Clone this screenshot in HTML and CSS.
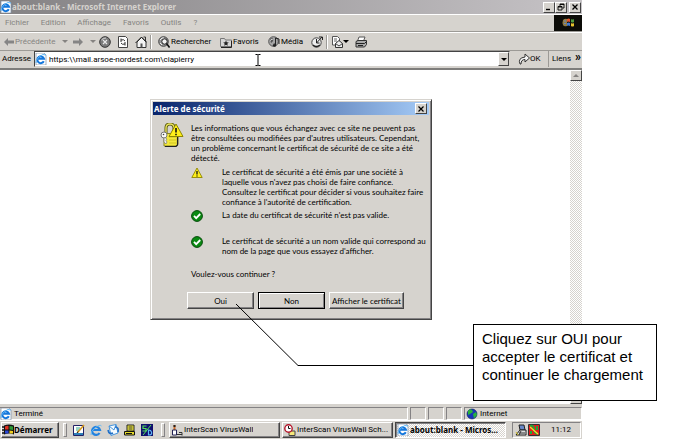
FILE: index.html
```
<!DOCTYPE html>
<html lang="fr">
<head>
    <meta charset="UTF-8">
    <meta name="viewport" content="width=device-width, initial-scale=1.0">
    <title>about:blank - Microsoft Internet Explorer</title>
    <link rel="stylesheet" href="styles.css">
</head>
<body>
    <svg class="symbols" aria-hidden="true">
        <symbol id="ie" viewBox="0 0 12 12">
            <path d="M1 0h8l2 2v10H1z" fill="#fff" stroke="#7d8fa8" stroke-width=".7"/>
            <path d="M8.8 8.2A3.4 3.4 0 1 1 9 5.8H3" fill="none" stroke="#1577dc" stroke-width="2"/>
            <path d="M1 10Q0 8 4 4t7-2" fill="none" stroke="#5ab4f5"/>
        </symbol>
        <symbol id="check" viewBox="0 0 12 12">
            <circle cx="6" cy="6" r="5.4" fill="#0a8a12" stroke="#064b0a" stroke-width="1"/>
            <path d="M3 5.8l2.2 2.3L9.2 4" fill="none" stroke="#fff" stroke-width="1.8"/>
        </symbol>
        <symbol id="warn" viewBox="0 0 12 12">
            <path d="M6 1l5.2 9.5H.8z" fill="#ffef1a" stroke="#8d8600" stroke-width=".9" stroke-linejoin="round"/>
            <path d="M6 4v3.4M6 8.4v1.2" stroke="#111" stroke-width="1.3"/>
        </symbol>
    </svg>

    <div class="screen">
        <header class="titlebar">
            <svg class="icon"><use href="#ie"/></svg>
            <h1>about:blank - Microsoft Internet Explorer</h1>
            <button class="caption" aria-label="Réduire"><svg viewBox="0 0 8 8"><path d="M1 6.5h4" stroke="#000" stroke-width="1.4"/></svg></button>
            <button class="caption" aria-label="Restaurer"><svg viewBox="0 0 8 8"><path d="M3 3V1h4v4H5.500M3 1.500h4M1 3.500h4v3.500H1zM1 4h4" fill="none" stroke="#000" stroke-width=".9"/></svg></button>
            <button class="caption close" aria-label="Fermer"><svg viewBox="0 0 8 8"><path d="M1.500 1.500l5 5M6.500 1.500l-5 5" stroke="#000" stroke-width="1.3"/></svg></button>
        </header>

        <nav class="menubar">
            <button>Fichier</button>
            <button>Edition</button>
            <button>Affichage</button>
            <button>Favoris</button>
            <button>Outils</button>
            <button>?</button>
            <span class="brand">
                <svg viewBox="0 0 14 12">
                    <path d="M6 2q2-1 3 0v3q-2-1-3 0z" fill="#e2562b"/>
                    <path d="M10 2q1.500 1 3 0v3q-1.500 1-3 0z" fill="#4f9b3f"/>
                    <path d="M6 6q2-1 3 0v3q-2-1-3 0z" fill="#3f78d0"/>
                    <path d="M10 6q1.500 1 3 0v3q-1.500 1-3 0z" fill="#e7c32f"/>
                    <path d="M2 3q2-2 4-1v7q-3 1-4-1-1-2 0-5z" fill="#8f7a45"/>
                    <path d="M3 4h2M3 6.500h2" stroke="#6d86b8"/>
                </svg>
            </span>
        </nav>

        <div class="toolbar">
            <button class="back" disabled><svg class="icon" viewBox="0 0 12 12"><path d="M1 6l4-4v2.500h6v3H5V10z" fill="#858585"/></svg>Précédente</button>
            <button class="more" disabled aria-label="Historique précédent"><i class="arrow"></i></button>
            <button class="forward" disabled aria-label="Suivante"><svg class="icon" viewBox="0 0 12 12"><path d="M11 6L7 2v2.500H1v3h6V10z" fill="#858585"/></svg></button>
            <button class="more" disabled aria-label="Historique suivant"><i class="arrow"></i></button>
            <button class="tool" aria-label="Arrêter"><svg class="icon" viewBox="0 0 12 12"><circle cx="6" cy="6" r="5.300" fill="#7b7b7b" stroke="#333"/><path d="M2.500 4Q4 1.800 7 2" stroke="#ddd" fill="none"/><path d="M4 4l4 4M8 4L4 8" stroke="#e8e8e8" stroke-width="1.200"/></svg></button>
            <button class="tool" aria-label="Actualiser"><svg class="icon" viewBox="0 0 12 12"><path d="M1.500.500h7l2 2v9h-9z" fill="#fff" stroke="#444"/><path d="M8 5Q7 3 4 4M4 2.500V6M4 7q1 2 4 1M8 6v3.500" fill="none" stroke="#333"/></svg></button>
            <button class="tool" aria-label="Démarrage"><svg class="icon" viewBox="0 0 12 12"><path d="M8.500 1h2v4" fill="none" stroke="#333"/><path d="M2 6v5.500h9V6L6.500 1.500z" fill="#f4f4f4" stroke="#333"/><path d="M.500 7l6-6L12 6.500" fill="none" stroke="#222"/><path d="M5.500 7.500h2v4h-2z" fill="#555"/></svg></button>
            <span class="sep"></span>
            <button class="search"><svg class="icon" viewBox="0 0 12 12"><circle cx="5.500" cy="5.500" r="4.800" fill="#999" stroke="#444"/><path d="M2 4Q4 1 6 2M2 7l2 2" stroke="#eee" fill="none"/><circle cx="6.500" cy="5.500" r="2.700" fill="#f2f2f2" stroke="#222"/><path d="M8.500 7.500l3 4" stroke="#111" stroke-width="1.600"/></svg>Rechercher</button>
            <button class="favs"><svg class="icon" viewBox="0 0 12 12"><path d="M.500 10.500v-8h4l1 1.500h6v6.500z" fill="#d6d6d6" stroke="#777"/><path d="M1 11.500h10.500V5" stroke="#222" fill="none"/><path d="M6 4.500l.8 1.800 2 .2-1.500 1.300.5 2L6 8.800 4.200 9.800l.5-2-1.500-1.300 2-.2z" fill="#222"/></svg>Favoris</button>
            <button class="media"><svg class="icon" viewBox="0 0 12 12"><circle cx="5.500" cy="5.500" r="4.800" fill="#a6a6a6" stroke="#555"/><path d="M2 3q2-2 3 0t-2 4zM5 8l2-1 1 2-2 1.500z" fill="#555"/><path d="M7.500 9V2l3.500 1v5" fill="none" stroke="#222"/><ellipse cx="6.500" cy="9.500" rx="1.600" ry="1.300" fill="#222"/><path d="M2.500 4.500q1-2 2-1" stroke="#fff" fill="none"/></svg>Média</button>
            <button class="tool" aria-label="Historique"><svg class="icon" viewBox="0 0 12 12"><circle cx="5.500" cy="6.500" r="4.700" fill="#efefef" stroke="#444"/><path d="M2 9q3 3 7 0" stroke="#222" stroke-width="1.500" fill="none"/><path d="M5.500 3v4h3M5.500 7L11 1M8 1h3.500v3" stroke="#222" fill="none"/></svg></button>
            <span class="sep"></span>
            <button class="mail" aria-label="Courrier"><svg class="icon" viewBox="0 0 12 12"><path d="M1.500.500h5l2 2V9h-7z" fill="#fff" stroke="#555"/><path d="M3 3h3M3 5h3" stroke="#666"/><path d="M4.500 7.500l3.500-3 3.500 3v4h-7z" fill="#eee" stroke="#333"/><path d="M4.500 7.500L8 10l3.500-2.500" fill="none" stroke="#444"/></svg><i class="arrow dark"></i></button>
            <button class="tool" aria-label="Imprimer"><svg class="icon" viewBox="0 0 12 12"><path d="M4 1h6L8.500 5h-6z" fill="#fff" stroke="#555"/><path d="M1 5.500l2-1h8.500v4l-2 2.500H1z" fill="#aaa" stroke="#333"/><path d="M1 7.500h8.500l2-2M3 9.500h5" fill="none" stroke="#222"/></svg></button>
        </div>

        <form class="address">
            <label for="url">Adresse</label>
            <div class="combo">
                <svg class="icon"><use href="#ie"/></svg>
                <input type="text" id="url" name="url" value="https:\\mail.arsoe-nordest.com\ciapierry">
                <button type="button" aria-label="Adresses récentes"><i class="arrow dark"></i></button>
            </div>
            <button type="button" class="go"><svg class="icon" viewBox="0 0 12 12"><path d="M2 11Q-.5 5 7 4V1l4.500 4L7 9V6.500Q3 6.500 3 11z" fill="#f6f6f6" stroke="#333"/></svg>OK</button>
            <button type="button" class="links">Liens <b>»</b></button>
        </form>

        <main class="page">
            <div class="scrollbar"><button aria-label="Défiler vers le haut"><i class="arrow up"></i></button><button aria-label="Défiler vers le bas"><i class="arrow"></i></button></div>
            <svg class="cursor" viewBox="0 0 6 12"><path d="M.500.500h2l.500.500.500-.500h2M.500 11.500h2l.500-.500.500.500h2M3 1v10" fill="none" stroke="#000"/></svg>

            <section class="dialog" role="dialog" aria-labelledby="dlg-title">
                <div class="dialog-title">
                    <h2 id="dlg-title">Alerte de sécurité</h2>
                    <button class="caption" aria-label="Fermer"><svg viewBox="0 0 8 8"><path d="M1.500 1.500l5 5M6.500 1.500l-5 5" stroke="#000" stroke-width="1.2"/></svg></button>
                </div>
                <div class="dialog-body">
                    <svg class="lock" viewBox="0 0 24 24">
                        <path d="M6 11V5q0-4 4-4t4 4v6" fill="none" stroke="#55550a" stroke-width="3"/>
                        <path d="M6 11V5q0-4 4-4t4 4v6" fill="none" stroke="#e8e35e" stroke-width="1.400"/>
                        <path d="M4 10.500h14v11l-2 1.500H4z" fill="#f4e83c" stroke="#8a8420"/>
                        <path d="M17.500 10v12l-1.500 1.500H5" fill="none" stroke="#222" stroke-width="1.200"/>
                        <path d="M9 14h7M9 17h7M9 20h7" stroke="#d0c520"/>
                        <circle cx="4" cy="12" r="3" fill="#fafafa" stroke="#777"/>
                        <circle cx="3.500" cy="11.500" r=".8" fill="#444"/>
                        <path d="M5 14.500l2 1.500-1 1.500 1 1.500-1 2-2-2v-4z" fill="#eee" stroke="#777" stroke-width=".7"/>
                        <path d="M16 1l7 12.500H9z" fill="#ffef1a" stroke="#8d8600" stroke-linejoin="round"/>
                        <path d="M16 5v4.500M16 10.800v1.500" stroke="#111" stroke-width="1.600"/>
                    </svg>
                    <div class="message">
                        <p>Les informations que vous échangez avec ce site ne peuvent pas<br>être consultées ou modifiées par d'autres utilisateurs. Cependant,<br>un problème concernant le certificat de sécurité de ce site a été<br>détecté.</p>
                        <ul>
                            <li><svg class="icon"><use href="#warn"/></svg><span>Le certificat de sécurité a été émis par une société à<br>laquelle vous n'avez pas choisi de faire confiance.<br>Consultez le certificat pour décider si vous souhaitez faire<br>confiance à l'autorité de certification.</span></li>
                            <li class="date"><svg class="icon"><use href="#check"/></svg><span>La date du certificat de sécurité n'est pas valide.</span></li>
                            <li><svg class="icon"><use href="#check"/></svg><span>Le certificat de sécurité a un nom valide qui correspond au<br>nom de la page que vous essayez d'afficher.</span></li>
                        </ul>
                        <p>Voulez-vous continuer ?</p>
                    </div>
                </div>
                <div class="dialog-buttons">
                    <button>Oui</button>
                    <button class="default">Non</button>
                    <button class="wide">Afficher le certificat</button>
                </div>
            </section>
        </main>

        <footer class="statusbar">
            <span class="done"><svg class="icon"><use href="#ie"/></svg>Terminé</span>
            <span class="cell"></span>
            <span class="cell"></span>
            <span class="cell"></span>
            <span class="zone"><svg class="icon" viewBox="0 0 12 12"><circle cx="6" cy="6" r="5" fill="#1836b8" stroke="#0b1a55" stroke-width=".6"/><path d="M2 3q2-3 4-1l1 2-3 2-2 1zM7 6l3-2 1 3-3 3.500z" fill="#28b43c"/></svg>Internet</span>
        </footer>

        <div class="taskbar">
            <button class="start"><svg class="icon" viewBox="0 0 12 12"><path d="M0 3h2M0 6h2M0 9h2" stroke="#111" stroke-width="1.500"/><path d="M2 1.500q5-2 10 0v9q-5-2-10 0z" fill="#111"/><path d="M3 2.500q2-1 3.500-.500v3.500H3z" fill="#e03020"/><path d="M7.500 2q2 0 3.500.500v3.500l-3.500-.500z" fill="#2a9a35"/><path d="M3 6.500h3.500V9.500H3z" fill="#2b47d6"/><path d="M7.500 6.500l3.500.500v2.500H7.500z" fill="#f0d020"/></svg>Démarrer</button>
            <span class="grip"></span>
            <div class="quick">
                <button aria-label="Bureau"><svg class="icon" viewBox="0 0 12 12"><path d="M.500 1.500h10v10H.500z" fill="#fff" stroke="#226"/><path d="M1 9h9v2H1z" fill="#2f7fb8"/><path d="M3 4h4M3 6h3" stroke="#3a8"/><path d="M4.500 8.500L11 1" stroke="#d89a20" stroke-width="1.700"/><path d="M4 9l1-1.500" stroke="#111"/></svg></button>
                <button aria-label="Internet Explorer"><svg class="icon" viewBox="0 0 12 12"><path d="M9.500 9A4 4 0 1 1 10 6H3" fill="none" stroke="#2382df" stroke-width="2.200"/><path d="M1 11Q0 8 5 4t6.500-2" fill="none" stroke="#65b9f4"/></svg></button>
                <button aria-label="Outlook Express"><svg class="icon" viewBox="0 0 12 12"><path d="M2 2l7-1.500L11 9l-7 2.500z" fill="#f5fbff" stroke="#4795dc"/><path d="M2 2l5 4 2-5.500" fill="none" stroke="#4795dc"/><path d="M1 6q1 5 5 3M8 3q4 0 3 5" fill="none" stroke="#2170c8" stroke-width="1.600"/></svg></button>
                <button aria-label="Téléphone"><svg class="icon" viewBox="0 0 12 12"><path d="M3 1h7v6H3z" fill="#f4ed3a" stroke="#222"/><path d="M4.500 3h4M4.500 5h4" stroke="#333"/><path d="M.500 7.500h10v3.500H.500z" fill="#e5d928" stroke="#111"/><path d="M2 9.500h6" stroke="#111"/></svg></button>
                <button aria-label="SD"><svg class="icon" viewBox="0 0 12 12"><path d="M0 0h12v12H0z" fill="#10106e"/><path d="M5.500 2H2v2.500h3V7H1.500" fill="none" stroke="#54e05c" stroke-width="1.200"/><path d="M7.500 6v5q4 0 3-3-.5-2-3-2z" fill="none" stroke="#5fb8f5" stroke-width="1.200"/><path d="M10 1L2 11" stroke="#54e05c"/></svg></button>
            </div>
            <span class="grip"></span>
            <button class="task"><svg class="icon" viewBox="0 0 12 12"><path d="M3.500 1v6" stroke="#cf6a28" stroke-width="2"/><path d="M2.500 1h2v2h-2z" fill="#222"/><path d="M1.500 6h4v5h-4z" fill="#fff" stroke="#225"/><path d="M6 10.500h5M8 8.500h3v3" fill="none" stroke="#333"/></svg><span>InterScan VirusWall</span></button>
            <button class="task"><svg class="icon" viewBox="0 0 12 12"><path d="M5 7h6v4.500H5z" fill="#f7e87a" stroke="#444"/><circle cx="4.500" cy="4.500" r="3.700" fill="#fff" stroke="#b5162b" stroke-width="1.400"/><path d="M4.500 2v2.500h2" fill="none" stroke="#111"/></svg><span>InterScan VirusWall Sch...</span></button>
            <button class="task active"><svg class="icon"><use href="#ie"/></svg><span>about:blank - Micros...</span></button>
            <div class="tray">
                <svg class="icon" viewBox="0 0 12 12"><path d="M4 1h5l1 5H5z" fill="#6888c8" stroke="#222"/><path d="M1 11l4-5h6v5z" fill="#ddd" stroke="#222"/><path d="M4 9h6M6 7l-2 4" stroke="#333"/><path d="M1 8l2 3" stroke="#d5c321"/></svg>
                <svg class="icon" viewBox="0 0 12 12"><path d="M.500.500h11v11H.500z" fill="#e51c1c" stroke="#333"/><path d="M2 2q4-1 4 3t4 5M9 2v4M3 7v3" fill="none" stroke="#20a838" stroke-width="2"/><path d="M2 3l8 7" stroke="#f2e331" stroke-width="1.300"/></svg>
                <time>11:12</time>
            </div>
        </div>
    </div>

    <!-- line from the Oui button to the note -->
    <svg class="leader" viewBox="0 0 238 62"><path d="M0 0l62 61.500h176" fill="none" stroke="#000"/></svg>
    <aside class="note">Cliquez sur OUI pour<br>accepter le certificat et<br>continuer le chargement</aside>
</body>
</html>
```

FILE: styles.css
```
* {
    box-sizing: border-box;
}
body {
    position: relative;
    margin: 0;
    padding-right: 91px;
    background: #fff;
    color: #000;
    font-family: Roboto, sans-serif;
    font-size: 8px;
    line-height: 10px;
    overflow: hidden;
}
button, input {
    margin: 0;
    padding: 0;
    border: none;
    background: none;
    color: inherit;
    font: inherit;
    white-space: nowrap;
}
h1, h2, p, ul {
    margin: 0;
    padding: 0;
    font-size: inherit;
}
h1, h2, .start, .task.active {
    font-family: "Noto Sans", sans-serif;
    font-weight: bold;
}
.symbols {
    position: absolute;
    width: 0;
    height: 0;
}
.icon {
    flex: none;
    display: block;
    width: 12px;
    height: 12px;
}
.screen {
    display: flex;
    flex-direction: column;
    height: 100vh;
    background: #d6d3ce;
}

/* window title */
.titlebar {
    display: flex;
    align-items: center;
    height: 14px;
    padding-right: 1px;
    background: linear-gradient(to right, #848284, #c6c3c6);
}
.titlebar h1 {
    flex: 1;
    color: #d6d3ce;
}
.caption {
    display: flex;
    align-items: center;
    justify-content: center;
    width: 12px;
    height: 11px;
    border: 1px solid;
    border-color: #fff #444 #444 #fff;
    background: #d6d3ce;
}
.caption svg {
    width: 8px;
    height: 8px;
}
.titlebar .close {
    margin-left: 2px;
}

/* menu and tools */
.menubar {
    display: flex;
    align-items: center;
    gap: 12px;
    height: 18px;
    padding-left: 5px;
    border-top: 1px solid #fff;
    border-bottom: 1px solid #9c9a96;
    color: #858381;
}
.brand {
    display: flex;
    align-items: center;
    justify-content: center;
    align-self: stretch;
    width: 28px;
    margin-left: auto;
    background: #0c0c08;
}
.brand svg {
    width: 14px;
    height: 12px;
}
.toolbar {
    display: flex;
    align-items: center;
    height: 19px;
    padding-left: 3px;
    border-top: 1px solid #fff;
    border-bottom: 1px solid #9c9a96;
}
.toolbar button {
    display: flex;
    align-items: center;
}
.toolbar button:disabled {
    color: #858381;
}
.toolbar .back {
    width: 56px;
}
.toolbar .more {
    width: 13px;
    padding-left: 3px;
}
.toolbar .forward {
    width: 15px;
}
.toolbar .tool {
    width: 18px;
    padding-left: 3px;
}
.toolbar .more + .tool {
    margin-left: -4px;
}
.arrow {
    width: 0;
    height: 0;
    border: 3px solid transparent;
    border-top-color: #858381;
    border-bottom: none;
}
.arrow.dark {
    border-top-color: #000;
}
.arrow.up {
    border-top: none;
    border-bottom: 3px solid #858381;
}
.sep {
    width: 2px;
    height: 14px;
    border-left: 1px solid #9c9a96;
    border-right: 1px solid #fff;
}
.toolbar .search {
    width: 68px;
    padding-left: 6px;
    gap: 1px;
}
.toolbar .favs {
    width: 48px;
    gap: 1px;
}
.toolbar .media {
    width: 40px;
    gap: 1px;
}
.toolbar .mail {
    width: 24px;
    padding-left: 3px;
}

/* address line */
.address {
    display: flex;
    align-items: stretch;
    height: 19px;
    margin: 0;
    padding-bottom: 1px;
    border-bottom: 2px solid #7e7d7b;
}
.address label {
    width: 34px;
    padding: 3px 0 0 2px;
}
.combo {
    display: flex;
    align-items: center;
    flex: 1;
    border: 1px solid #444;
    border-right-color: #d6d3ce;
    border-bottom-color: #d6d3ce;
    background: #fff;
}
.combo input {
    flex: 1;
    min-width: 0;
    height: 12px;
    padding-left: 2px;
    outline: none;
}
.combo button {
    display: flex;
    align-items: center;
    justify-content: center;
    width: 11px;
    align-self: stretch;
    border: 1px solid;
    border-color: #fff #444 #444 #fff;
    background: #d6d3ce;
}
.go {
    display: flex;
    align-items: center;
    width: 38px;
    padding-left: 8px;
}
.links {
    display: flex;
    align-items: center;
    gap: 4px;
    width: 34px;
    padding-left: 3px;
    border-left: 1px solid #9c9a96;
}
.links b {
    padding-bottom: 4px;
    font-size: 12px;
}

/* page area */
.page {
    position: relative;
    flex: 1;
    display: flex;
    justify-content: flex-end;
    background: #fff;
}
.scrollbar {
    display: flex;
    flex-direction: column;
    justify-content: space-between;
    width: 12px;
    background: repeating-conic-gradient(#fff 0 25%, #d6d3ce 0 50%) 0 0 / 2px 2px;
}
.scrollbar button {
    display: flex;
    align-items: center;
    justify-content: center;
    height: 11px;
    border: 1px solid;
    border-color: #fff #444 #444 #fff;
    background: #d6d3ce;
}
.cursor {
    position: absolute;
    left: 255px;
    top: -16px;
    width: 6px;
    height: 12px;
}

/* security alert */
.dialog {
    position: absolute;
    top: 29px;
    left: 50%;
    width: 282px;
    margin-left: -141px;
    padding: 2px 2px 10px;
    border: 1px solid;
    border-color: #d6d3ce #444 #444 #d6d3ce;
    box-shadow: inset 1px 1px #fff, inset -1px -1px #848284;
    background: #d6d3ce;
    font-family: Lato, sans-serif;
}
.dialog-title {
    display: flex;
    align-items: center;
    height: 13px;
    padding: 0 2px 0 1px;
    background: linear-gradient(to right, #08246b, #a5cbf7);
    color: #fff;
}
.dialog-title h2 {
    flex: 1;
}
.dialog-body {
    display: flex;
    padding: 8px 0 0 7px;
    white-space: nowrap;
}
.lock {
    flex: none;
    width: 24px;
    height: 24px;
    margin-right: 7px;
}
.message ul {
    list-style: none;
    padding: 4px 0 10px;
}
.message li {
    display: flex;
    gap: 19px;
    margin-bottom: 3px;
}
.message .date {
    margin-bottom: 14px;
}
.dialog-buttons {
    display: flex;
    gap: 4px;
    padding: 13px 0 0 34px;
}
.dialog-buttons button {
    width: 67px;
    height: 17px;
    border: 1px solid;
    border-color: #fff #444 #444 #fff;
    box-shadow: inset -1px -1px #848284;
}
.dialog-buttons .default {
    border-color: #000;
    box-shadow: inset 1px 1px #fff, inset -1px -1px #848284;
}
.dialog-buttons .wide {
    width: 75px;
}

/* status line */
.statusbar {
    display: flex;
    gap: 2px;
    height: 16px;
    padding-top: 2px;
    border-top: 1px solid #d6d3ce;
}
.statusbar span {
    display: flex;
    align-items: center;
    gap: 2px;
    border: 1px solid;
    border-color: #848284 #fff #fff #848284;
}
.statusbar .done {
    flex: 1;
    border-left: none;
}
.statusbar .cell {
    width: 16px;
}
.statusbar .zone {
    width: 118px;
    padding-left: 1px;
}

/* taskbar */
.taskbar {
    display: flex;
    align-items: center;
    gap: 2px;
    height: 19px;
    padding: 1px;
    border-top: 1px solid #fff;
}
.start, .task {
    display: flex;
    align-items: center;
    height: 16px;
    border: 1px solid;
    border-color: #fff #444 #444 #fff;
    box-shadow: inset -1px -1px #848284;
}
.start {
    width: 58px;
}
.grip {
    width: 4px;
    height: 14px;
    margin: 0 2px;
    border: 1px solid;
    border-color: #fff #848284 #848284 #fff;
}
.quick {
    display: flex;
    gap: 5px;
    width: 86px;
    padding-left: 2px;
}
.task {
    flex: 1;
    min-width: 0;
    gap: 1px;
    padding-left: 1px;
}
.task span {
    overflow: hidden;
}
.task.active {
    border-color: #444 #fff #fff #444;
    box-shadow: inset 1px 1px #848284;
    background: repeating-conic-gradient(#fff 0 25%, #d6d3ce 0 50%) 0 0 / 2px 2px;
}
.tray {
    display: flex;
    align-items: center;
    gap: 1px;
    width: 69px;
    height: 16px;
    margin-left: 4px;
    padding: 0 9px 0 2px;
    border: 1px solid;
    border-color: #848284 #fff #fff #848284;
}
.tray time {
    margin-left: auto;
}

/* annotation */
.leader {
    position: absolute;
    left: 236px;
    top: 304px;
    width: 238px;
    height: 62px;
}
.note {
    position: absolute;
    left: 473px;
    top: 324px;
    width: 184px;
    padding: 5px 8px 16px;
    border: 1px solid #000;
    background: #fff;
    font-family: "Liberation Sans", Arial, sans-serif;
    font-size: 15px;
    line-height: 18px;
    white-space: nowrap;
}
```
